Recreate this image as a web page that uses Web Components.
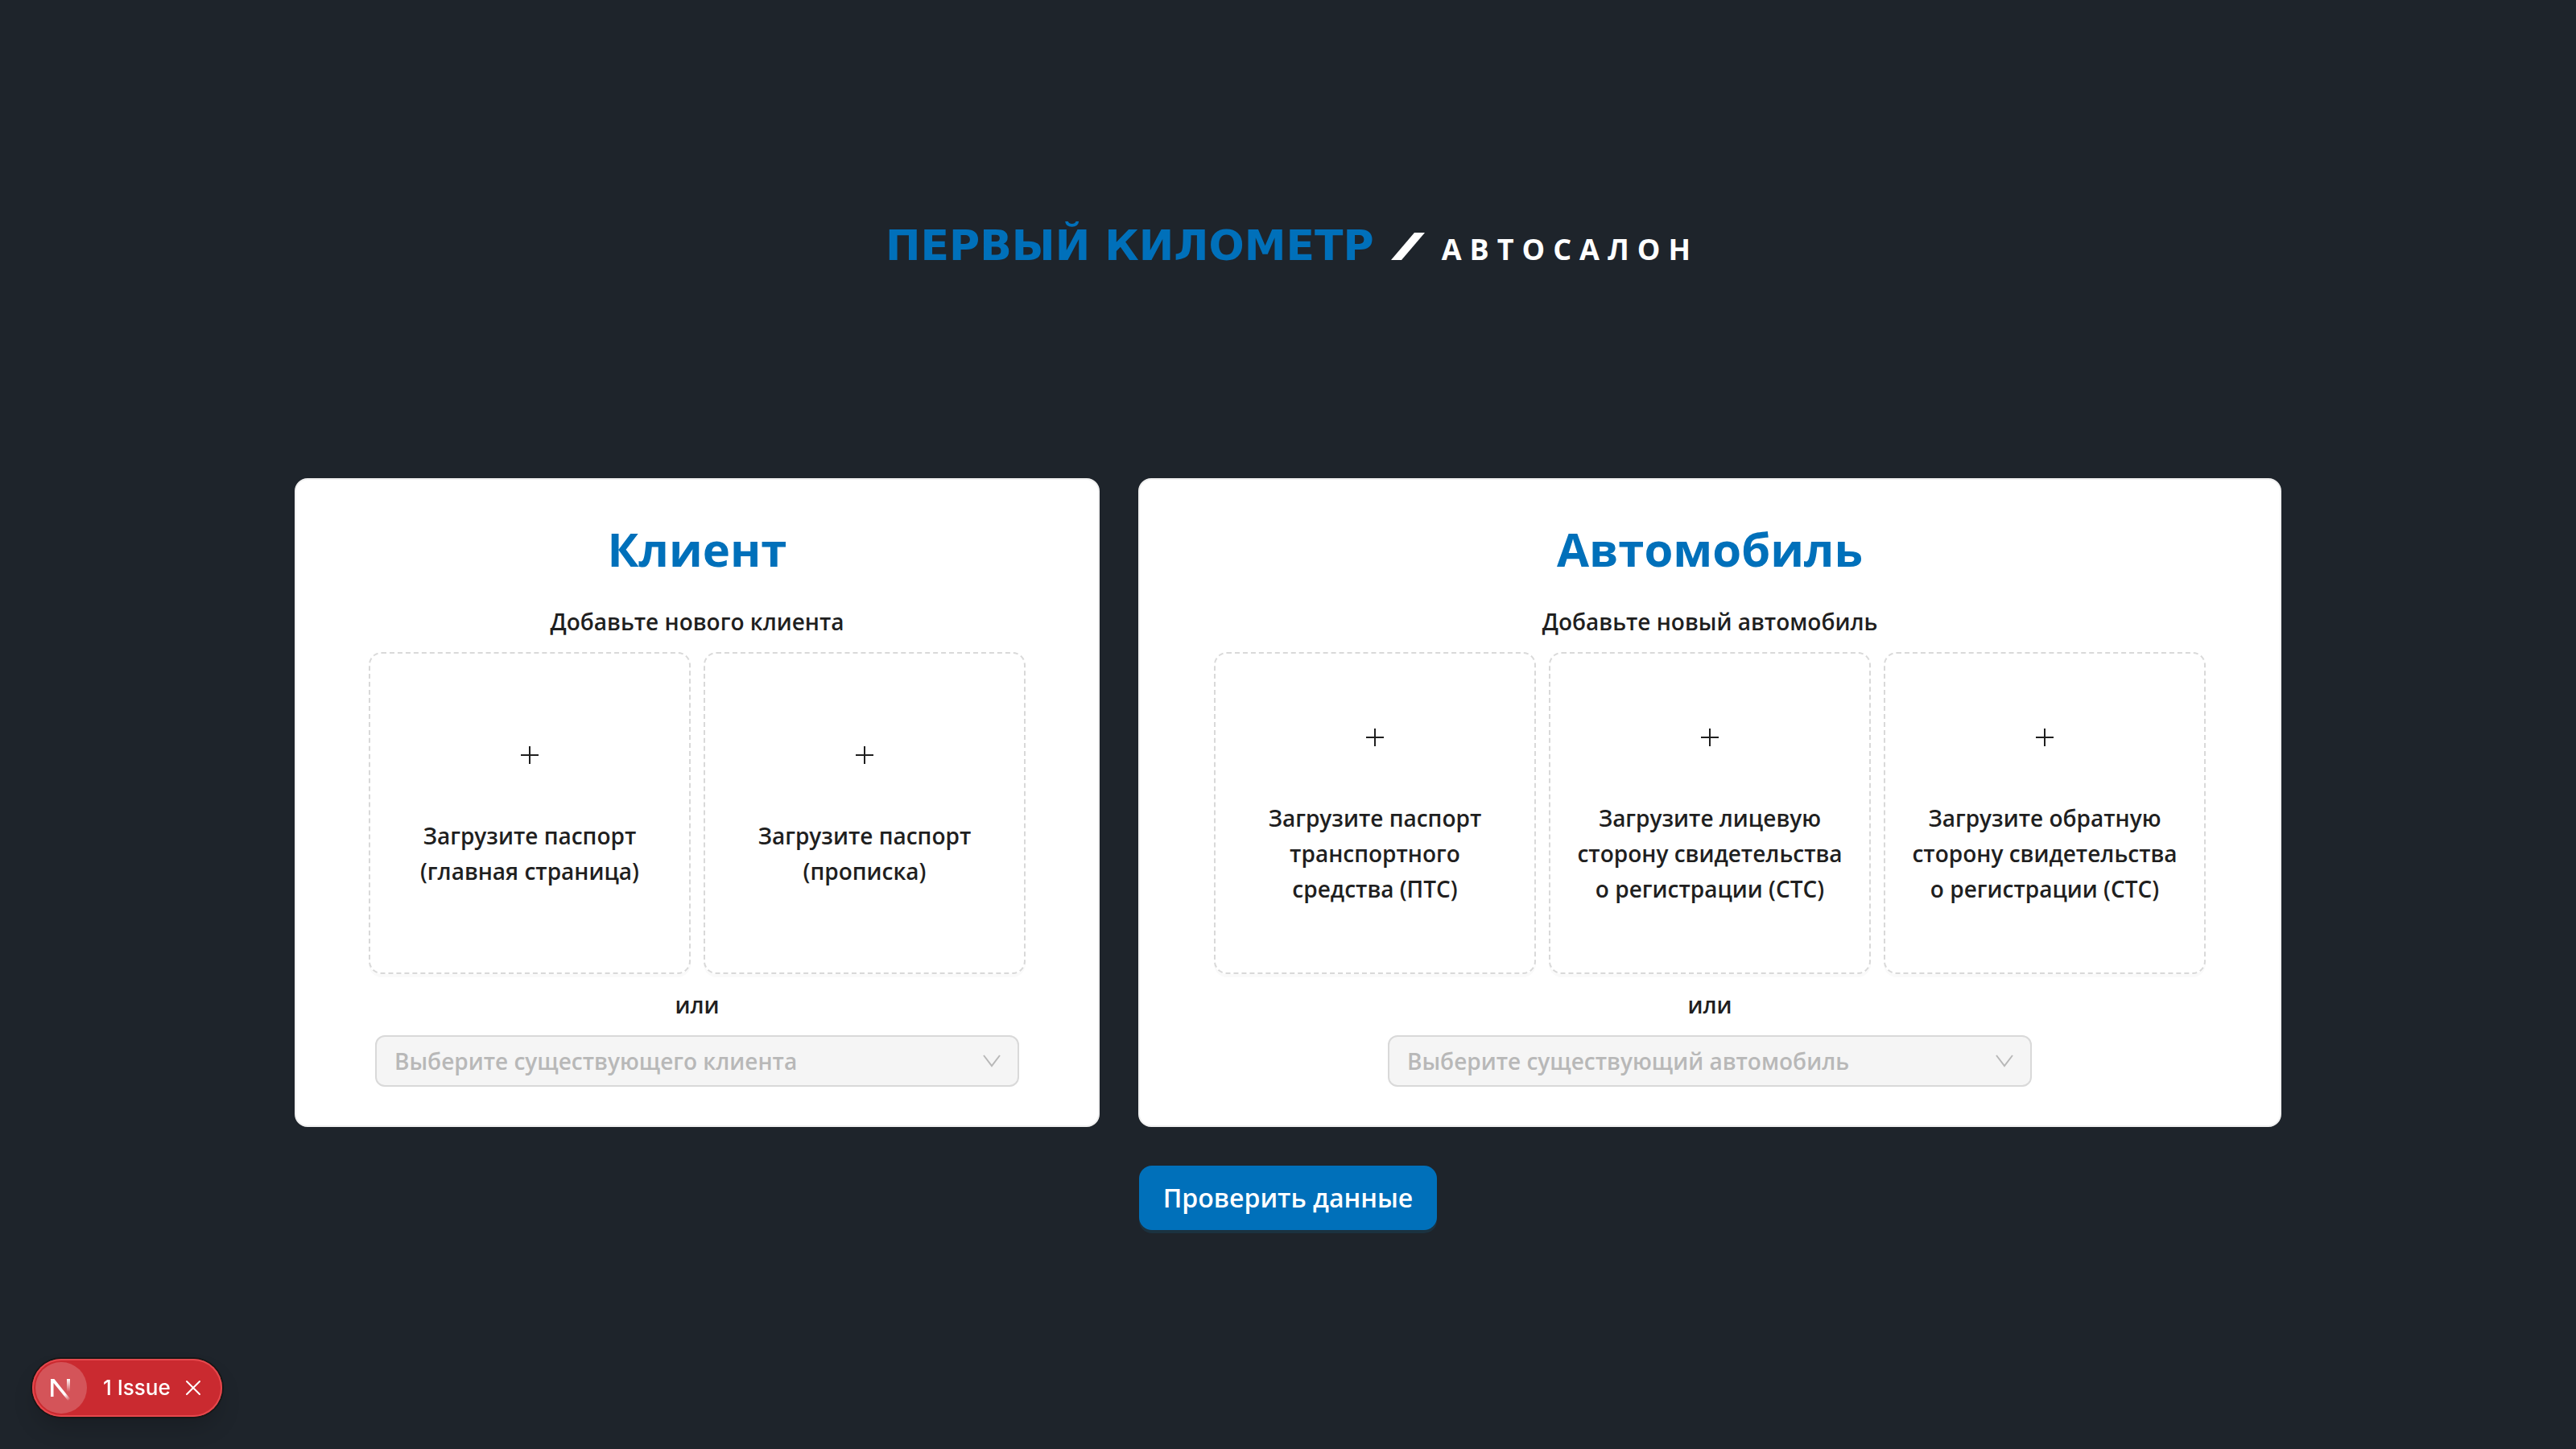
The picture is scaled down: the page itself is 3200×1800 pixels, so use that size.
<!DOCTYPE html>
<html lang="ru">
<head>
<meta charset="utf-8">
<meta name="viewport" content="width=device-width, initial-scale=1">
<title>Первый километр</title>
<style>
  body { margin: 0; background: #1e242b; color: #1f1f1f; font: 600 28px/44px "Open Sans", "Noto Sans", sans-serif; }
</style>
</head>
<body>
<deal-page>
  <brand-logo slot="logo"></brand-logo>
  <entity-card heading="Клиент" hint="Добавьте нового клиента" placeholder="Выберите существующего клиента">
    <upload-tile>Загрузите паспорт<br>(главная страница)</upload-tile>
    <upload-tile>Загрузите паспорт<br>(прописка)</upload-tile>
  </entity-card>
  <entity-card heading="Автомобиль" hint="Добавьте новый автомобиль" placeholder="Выберите существующий автомобиль">
    <upload-tile>Загрузите паспорт<br>транспортного<br>средства (ПТС)</upload-tile>
    <upload-tile>Загрузите лицевую<br>сторону свидетельства<br>о регистрации (СТС)</upload-tile>
    <upload-tile>Загрузите обратную<br>сторону свидетельства<br>о регистрации (СТС)</upload-tile>
  </entity-card>
  <primary-button slot="action">Проверить данные</primary-button>
</deal-page>
<issue-badge></issue-badge>

<script>
class BaseElement extends HTMLElement {
  render(html) {
    if (!this.shadowRoot) this.attachShadow({ mode: 'open' }).innerHTML = html;
  }
}

customElements.define('deal-page', class extends BaseElement {
  connectedCallback() {
    this.render(`
      <style>
        :host { display: block; }
        main { min-height: 100vh; box-sizing: border-box; padding: 0 48px; display: flex; flex-direction: column; align-items: center; justify-content: center; }
        .cards { width: 100%; max-width: 2468px; display: grid; grid-template-columns: 50fr 71fr; gap: 48px; margin-bottom: 48px; }
      </style>
      <main>
        <slot name="logo"></slot>
        <div class="cards"><slot></slot></div>
        <slot name="action"></slot>
      </main>`);
  }
});

customElements.define('brand-logo', class extends BaseElement {
  connectedCallback() {
    this.render(`
      <style>
        :host { display: flex; align-items: baseline; justify-content: space-between; width: 1000px; max-width: 100%; margin-bottom: calc(15vh - 14px); white-space: nowrap; }
        .name { color: #0070ba; font: 700 52px/66px "DejaVu Sans", sans-serif; }
        .kind { color: #fff; font-size: 36px; line-height: 52px; font-weight: 700; letter-spacing: 10px; margin-right: -10px; }
        svg { width: 42px; height: 34px; fill: #fff; }
      </style>
      <span class="name">ПЕРВЫЙ КИЛОМЕТР</span>
      <svg viewBox="0 0 42 34" aria-hidden="true"><path d="M29 0H42L13 34H0Z"/></svg>
      <span class="kind">АВТОСАЛОН</span>`);
  }
});

customElements.define('entity-card', class extends BaseElement {
  connectedCallback() {
    const get = name => this.getAttribute(name);
    this.render(`
      <style>
        :host { display: flex; flex-direction: column; align-items: center; box-sizing: border-box; min-width: 0; padding: 48px; background: #fff; border: 2px solid #f0f0f0; border-radius: 16px; }
        h2 { margin: 0 0 30px; color: #0070ba; font-size: 58px; line-height: 76px; font-weight: 700; }
        .tiles { display: flex; gap: 16px; margin: 16px 0; }
        .field { display: grid; align-items: center; width: 800px; max-width: 100%; margin-top: 16px; }
        .field > * { grid-area: 1 / 1; }
        select { appearance: none; box-sizing: border-box; width: 100%; height: 64px; margin: 0; padding: 0 22px; font: inherit; color: #b8b8b8; background: #f5f5f5; border: 2px solid #d9d9d9; border-radius: 12px; opacity: 1; }
        svg { justify-self: end; width: 24px; height: 24px; margin-right: 22px; fill: none; stroke: #b8b8b8; stroke-width: 2; pointer-events: none; }
      </style>
      <h2>${get('heading')}</h2>
      <div>${get('hint')}</div>
      <div class="tiles"><slot></slot></div>
      <label for="existing">или</label>
      <div class="field">
        <select id="existing" disabled><option>${get('placeholder')}</option></select>
        <svg viewBox="0 0 24 24" aria-hidden="true"><path d="M2 5L12 18L22 5"/></svg>
      </div>`);
  }
});

customElements.define('upload-tile', class extends BaseElement {
  connectedCallback() {
    this.render(`
      <style>
        :host { display: block; }
        button { display: flex; flex-direction: column; align-items: center; justify-content: center; box-sizing: border-box; width: 400px; height: 400px; margin: 0; padding: 0 16px; font: inherit; color: #1f1f1f; text-align: center; background: #fff; border: 2px dashed #d9d9d9; border-radius: 16px; box-shadow: 0 4px 0 rgba(0, 0, 0, .02); cursor: pointer; }
        svg { width: 28px; height: 44px; margin-bottom: 56px; stroke: #1f1f1f; stroke-width: 2; }
      </style>
      <button type="button">
        <svg viewBox="0 0 28 44" aria-hidden="true"><path d="M14 11V33M3 22H25"/></svg>
        <span><slot></slot></span>
      </button>`);
  }
});

customElements.define('primary-button', class extends BaseElement {
  connectedCallback() {
    this.render(`
      <style>
        :host { display: block; }
        button { display: block; height: 80px; margin: 0; padding: 0 30px; font: inherit; font-size: 32px; color: #fff; background: #0070ba; border: 0; border-radius: 16px; box-shadow: 0 4px 0 rgba(5, 175, 255, .1); cursor: pointer; }
      </style>
      <button type="button"><slot></slot></button>`);
  }
});

customElements.define('issue-badge', class extends BaseElement {
  connectedCallback() {
    this.render(`
      <style>
        :host { position: fixed; left: 40px; bottom: 40px; display: flex; align-items: center; box-sizing: border-box; height: 72px; padding: 0 24px 0 4px; border-radius: 36px; background: #ca2a30; color: #fff; font: 500 26px/32px Inter, sans-serif; box-shadow: inset 0 0 0 2px #e5484d, 0 0 0 2px #171717, 0 16px 32px -8px rgba(0, 0, 0, .24); }
        button { margin: 0; padding: 0; border: 0; background: none; color: inherit; font: inherit; display: flex; align-items: center; justify-content: center; cursor: pointer; }
        .mark { width: 64px; height: 64px; border-radius: 32px; background: rgba(255, 255, 255, .2); }
        .text { margin-left: 20px; }
        .close { width: 24px; height: 32px; margin-left: 16px; }
        svg { display: block; }
      </style>
      <button class="mark" type="button" aria-label="Next.js">
        <svg width="40" height="40" viewBox="0 0 40 40" fill="none" aria-hidden="true">
          <defs>
            <linearGradient id="leg" gradientUnits="userSpaceOnUse" x1="22" y1="22" x2="32" y2="34"><stop stop-color="#fff"/><stop offset=".4" stop-color="#fff"/><stop offset="1" stop-color="#fff" stop-opacity="0"/></linearGradient>
            <linearGradient id="bar" gradientUnits="userSpaceOnUse" x1="29" y1="9" x2="29" y2="25"><stop stop-color="#fff"/><stop offset="1" stop-color="#fff" stop-opacity="0"/></linearGradient>
          </defs>
          <path d="M7 31V9H11.400L31 33.500L28.500 36L10.500 14V31Z" fill="url(#leg)"/>
          <path d="M27 9H31V25H27Z" fill="url(#bar)"/>
        </svg>
      </button>
      <button class="text" type="button">1 Issue</button>
      <button class="close" type="button" aria-label="Закрыть">
        <svg width="24" height="24" viewBox="0 0 24 24" fill="none" stroke="#fff" stroke-width="2" stroke-linecap="round" aria-hidden="true"><path d="M4 4L20 20M20 4L4 20"/></svg>
      </button>`);
  }
});
</script>
</body>
</html>
